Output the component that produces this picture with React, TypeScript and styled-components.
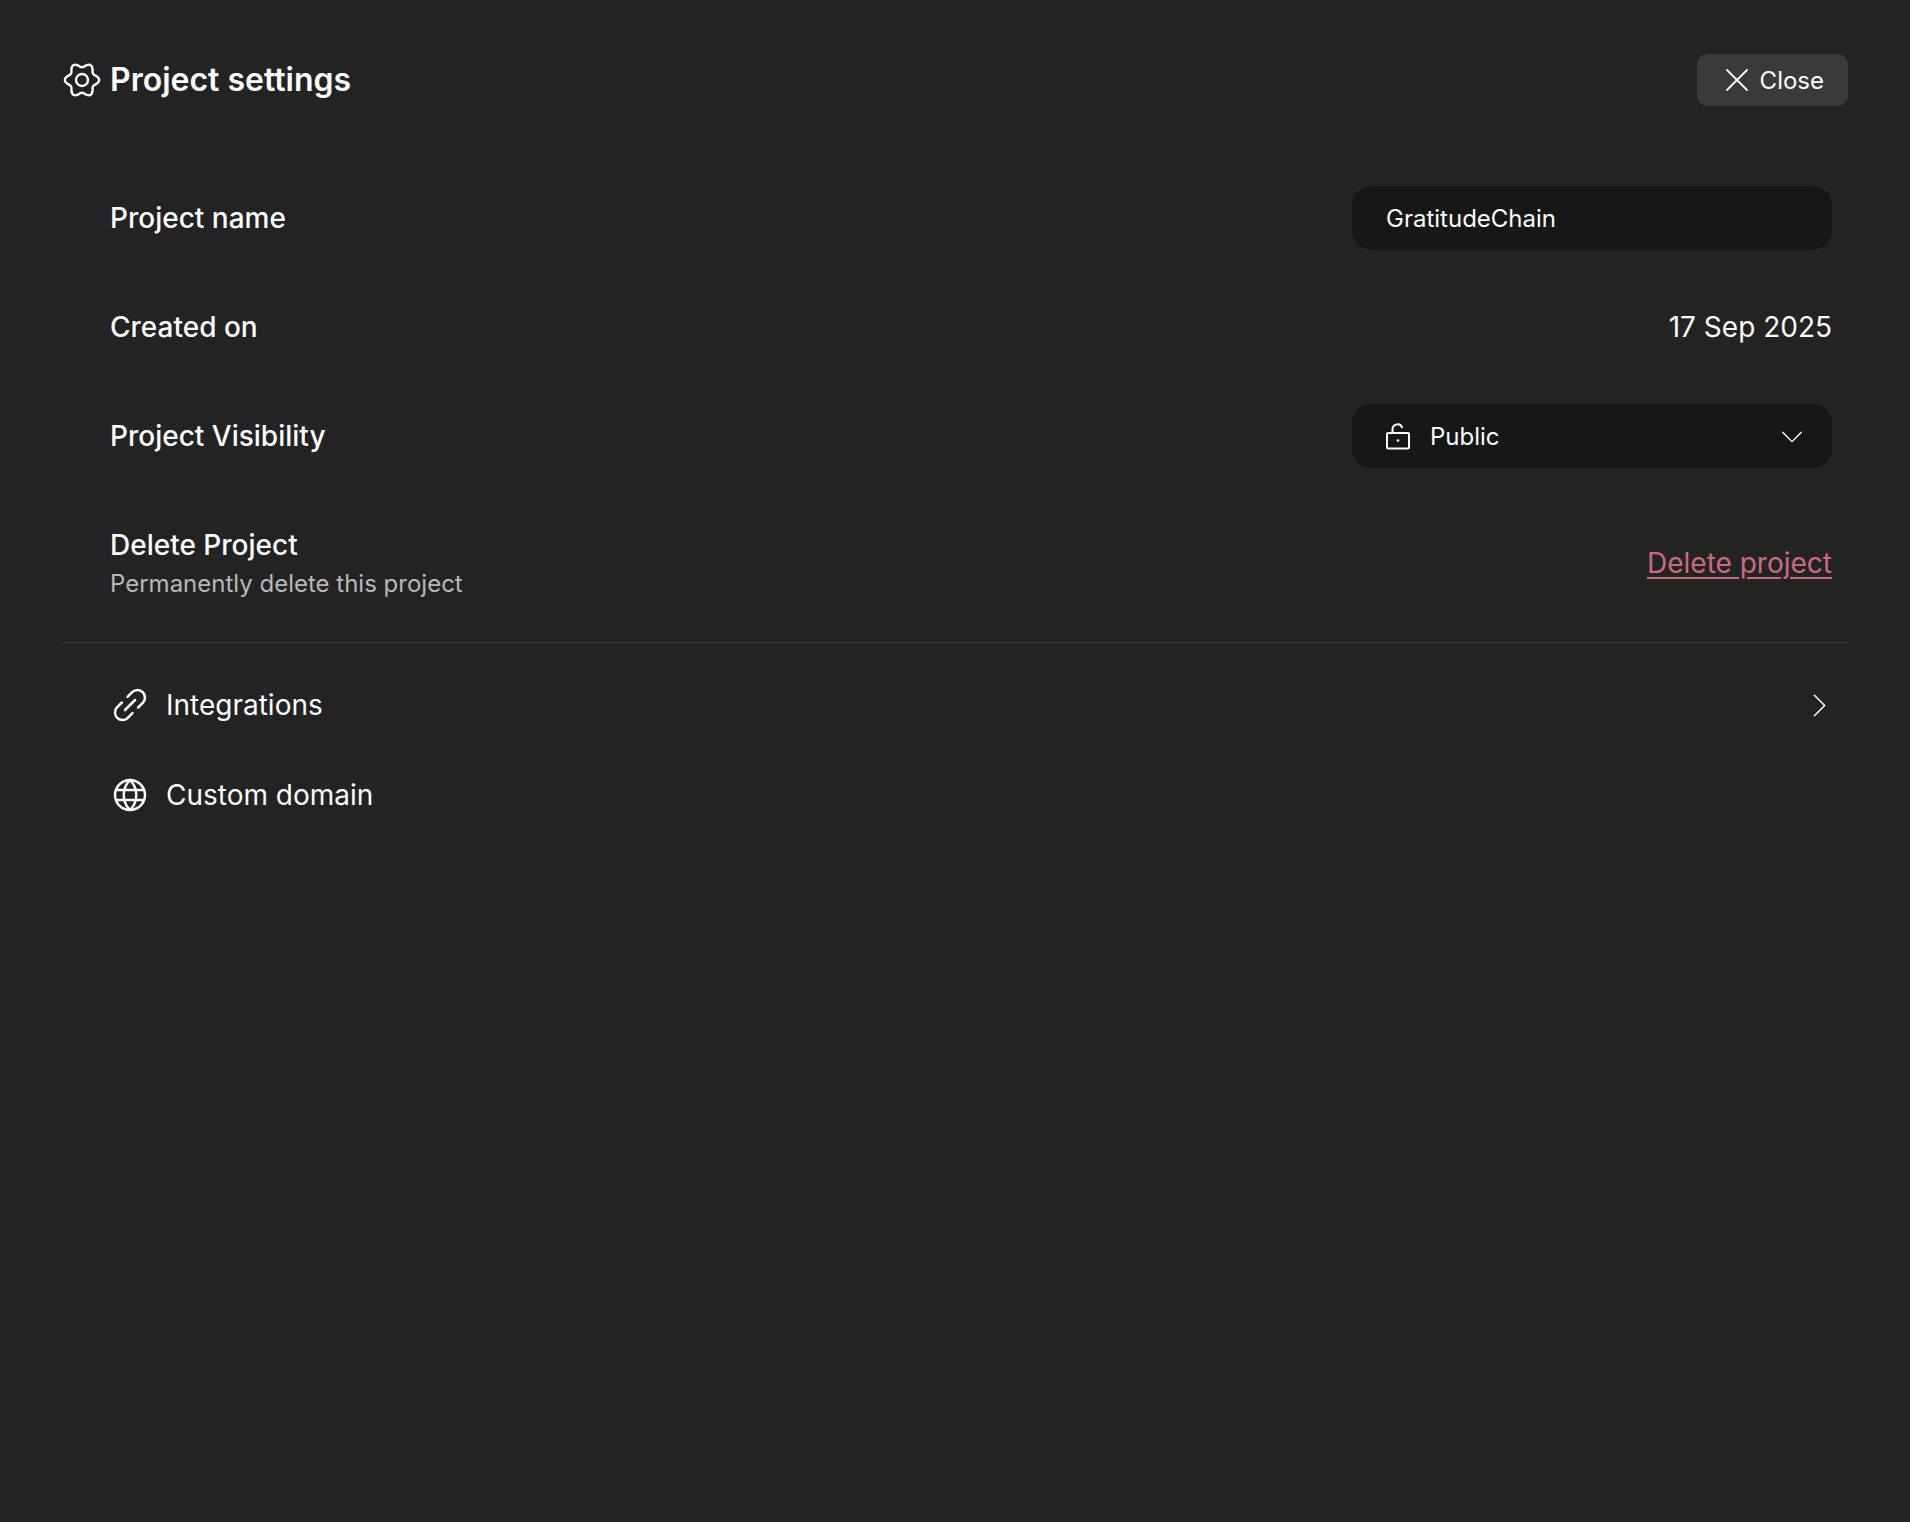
import React from "react";
import styled, { createGlobalStyle } from "styled-components";
import { PiCaretDownLight, PiCaretRightLight, PiGlobe, PiLinkSimple } from "react-icons/pi";

const GlobalStyle = createGlobalStyle`
  html, body {
    margin: 0;
    background: #232323;
  }
  body {
    font-family: Inter, "Liberation Sans", sans-serif;
    color: #fafafa;
  }
`;

const Page = styled.div`
  box-sizing: border-box;
  min-height: 1522px;
  padding: 54px 62px 0;
  background: #232323;
`;

const Header = styled.header`
  display: flex;
  align-items: center;
  justify-content: space-between;
  height: 52px;
  margin-bottom: 80px;
`;

const TitleGroup = styled.div`
  display: flex;
  align-items: center;
  gap: 8px;
`;

const Title = styled.h1`
  margin: 0;
  font-size: 32px;
  font-weight: 600;
  line-height: 40px;
`;

const CloseButton = styled.button`
  display: flex;
  align-items: center;
  gap: 12px;
  height: 52px;
  padding: 0 24px 0 29px;
  border: 0;
  border-radius: 10px;
  background: #3a3a3a;
  color: #fafafa;
  font: 400 24px Inter, sans-serif;
`;

const Settings = styled.div`
  display: flex;
  flex-direction: column;
  gap: 45px;
  padding: 0 16px 0 48px;
`;

const Row = styled.div`
  display: flex;
  align-items: center;
  justify-content: space-between;
  min-height: 64px;
`;

const DeleteRow = styled(Row)`
  margin-top: 14px;
`;

const Label = styled.div`
  font-size: 28px;
  font-weight: 500;
  line-height: 36px;
`;

const Hint = styled.div`
  margin-top: 3px;
  color: #b8b8b8;
  font-size: 24px;
  line-height: 36px;
`;

const Field = styled.div`
  box-sizing: border-box;
  display: flex;
  align-items: center;
  width: 480px;
  height: 64px;
  padding: 0 25px 0 34px;
  border-radius: 20px;
  background: #171717;
  font-size: 24px;
`;

const Value = styled.div`
  font-size: 28px;
`;

const VisibilityName = styled.span`
  flex: 1;
  margin-left: 20px;
`;

const DeleteLink = styled.a`
  margin-bottom: 3px;
  color: #c96b80;
  font-size: 28px;
  text-decoration: underline;
  text-underline-offset: 4px;
`;

const Divider = styled.hr`
  height: 1px;
  margin: 40px 0 0;
  border: 0;
  background: #3a3a3a;
`;

const LinkList = styled.div`
  display: flex;
  flex-direction: column;
  gap: 40px;
  padding: 37px 16px 0 48px;
`;

const LinkRow = styled.div`
  display: flex;
  align-items: center;
  gap: 16px;
  height: 50px;
  font-size: 28px;
`;

const LinkName = styled.span`
  flex: 1;
`;

const RowArrow = styled(PiCaretRightLight)`
  margin-right: -3px;
`;

const gearPath = (() => {
  const points: string[] = [];
  for (let i = 0; i < 120; i += 1) {
    const angle = (i / 120) * Math.PI * 2;
    const radius = 14.9 + 2.2 * Math.cos(6 * angle);
    points.push(`${(20 + radius * Math.cos(angle)).toFixed(2)} ${(20 + radius * Math.sin(angle)).toFixed(2)}`);
  }
  return `M${points.join("L")}Z`;
})();

const GearIcon = () => (
  <svg width="40" height="40" viewBox="0 0 40 40" fill="none" stroke="currentColor" strokeWidth="2.4" strokeLinejoin="round">
    <path d={gearPath} />
    <circle cx="20" cy="20" r="6" />
  </svg>
);

const CloseIcon = () => (
  <svg width="22" height="22" viewBox="0 0 22 22" fill="none" stroke="currentColor" strokeWidth="1.8" strokeLinecap="round">
    <path d="M1 1l20 20M21 1L1 21" />
  </svg>
);

const OpenLockIcon = () => (
  <svg width="24" height="27" viewBox="0 0 24 27" fill="none" stroke="currentColor" strokeWidth="2" strokeLinecap="round">
    <rect x="1" y="10" width="22" height="15.5" rx="1" />
    <path d="M6.5 10V6a5 5 0 0 1 9.5-1.8" />
    <circle cx="12" cy="17.5" r="1.3" fill="currentColor" stroke="none" />
  </svg>
);

export default function App() {
  return (
    <Page>
      <GlobalStyle />
      <Header>
        <TitleGroup>
          <GearIcon />
          <Title>Project settings</Title>
        </TitleGroup>
        <CloseButton>
          <CloseIcon />
          Close
        </CloseButton>
      </Header>
      <Settings>
        <Row>
          <Label>Project name</Label>
          <Field>GratitudeChain</Field>
        </Row>
        <Row>
          <Label>Created on</Label>
          <Value>17 Sep 2025</Value>
        </Row>
        <Row>
          <Label>Project Visibility</Label>
          <Field>
            <OpenLockIcon />
            <VisibilityName>Public</VisibilityName>
            <PiCaretDownLight size={30} />
          </Field>
        </Row>
        <DeleteRow>
          <div>
            <Label>Delete Project</Label>
            <Hint>Permanently delete this project</Hint>
          </div>
          <DeleteLink href="#">Delete project</DeleteLink>
        </DeleteRow>
      </Settings>
      <Divider />
      <LinkList>
        <LinkRow>
          <PiLinkSimple size={40} />
          <LinkName>Integrations</LinkName>
          <RowArrow size={33} />
        </LinkRow>
        <LinkRow>
          <PiGlobe size={40} />
          <LinkName>Custom domain</LinkName>
        </LinkRow>
      </LinkList>
    </Page>
  );
}
